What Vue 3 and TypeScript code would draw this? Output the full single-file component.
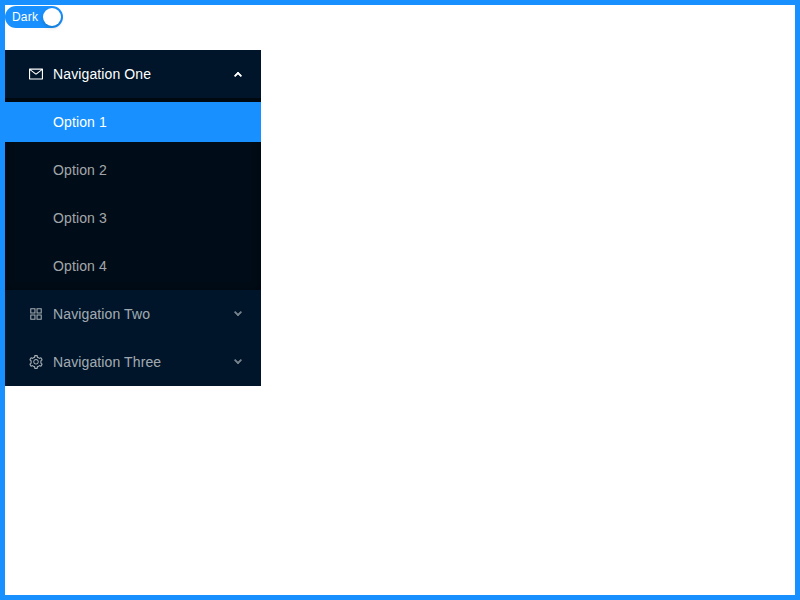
<script setup lang="ts">
import { ref } from 'vue'

interface MenuGroup {
  key: string
  title: string
  icon: string
  options: string[]
}

const groups: MenuGroup[] = [
  {
    key: 'sub1',
    title: 'Navigation One',
    icon: 'M928 160H96c-17.7 0-32 14.3-32 32v640c0 17.7 14.3 32 32 32h832c17.7 0 32-14.3 32-32V192c0-17.7-14.3-32-32-32zm-40 110.8V792H136V270.8l-27.6-21.5 39.3-50.5 42.8 33.3h643.1l42.8-33.3 39.3 50.5-27.7 21.5zM833.6 232L512 482 190.4 232l-42.8-33.3-39.3 50.5 27.6 21.5 341.6 265.6a55.99 55.99 0 0068.7 0L888 270.8l27.6-21.5-39.3-50.5-42.7 33.2z',
    options: ['Option 1', 'Option 2', 'Option 3', 'Option 4'],
  },
  {
    key: 'sub2',
    title: 'Navigation Two',
    icon: 'M464 144H160c-8.8 0-16 7.2-16 16v304c0 8.8 7.2 16 16 16h304c8.8 0 16-7.2 16-16V160c0-8.8-7.2-16-16-16zm-52 268H212V212h200v200zm452-268H560c-8.8 0-16 7.2-16 16v304c0 8.8 7.2 16 16 16h304c8.8 0 16-7.2 16-16V160c0-8.8-7.2-16-16-16zm-52 268H612V212h200v200zM464 544H160c-8.8 0-16 7.2-16 16v304c0 8.8 7.2 16 16 16h304c8.8 0 16-7.2 16-16V560c0-8.8-7.2-16-16-16zm-52 268H212V612h200v200zm452-268H560c-8.8 0-16 7.2-16 16v304c0 8.8 7.2 16 16 16h304c8.8 0 16-7.2 16-16V560c0-8.8-7.2-16-16-16zm-52 268H612V612h200v200z',
    options: [],
  },
  {
    key: 'sub3',
    title: 'Navigation Three',
    icon: 'M924.8 625.7l-65.5-56c3.1-19 4.7-38.4 4.7-57.8s-1.6-38.8-4.7-57.8l65.5-56a32.03 32.03 0 009.3-35.2l-.9-2.6a443.74 443.74 0 00-79.7-137.9l-1.8-2.1a32.12 32.12 0 00-35.1-9.5l-81.3 28.9c-30-24.6-63.5-44-99.7-57.6l-15.7-85a32.05 32.05 0 00-25.8-25.7l-2.7-.5c-52.1-9.4-106.9-9.4-159 0l-2.7.5a32.05 32.05 0 00-25.8 25.7l-15.8 85.4a351.86 351.86 0 00-99 57.4l-81.9-29.1a32 32 0 00-35.1 9.5l-1.8 2.1a446.02 446.02 0 00-79.7 137.9l-.9 2.6c-4.5 12.5-.8 26.5 9.3 35.2l66.3 56.6c-3.1 18.8-4.6 38-4.6 57.1 0 19.2 1.5 38.4 4.6 57.1L99 625.5a32.03 32.03 0 00-9.3 35.2l.9 2.6c18.1 50.4 44.9 96.9 79.7 137.9l1.8 2.1a32.12 32.12 0 0035.1 9.5l81.9-29.1c29.8 24.5 63.1 43.9 99 57.4l15.8 85.4a32.05 32.05 0 0025.8 25.7l2.7.5a449.4 449.4 0 00159 0l2.7-.5a32.05 32.05 0 0025.8-25.7l15.7-85a350 350 0 0099.7-57.6l81.3 28.9a32 32 0 0035.1-9.5l1.8-2.1c34.8-41.1 61.6-87.5 79.7-137.9l.9-2.6c4.5-12.3.8-26.3-9.3-35zM788.3 465.9c2.5 15.1 3.8 30.6 3.8 46.1s-1.3 31-3.8 46.1l-6.6 40.1 74.7 63.9a370.03 370.03 0 01-42.6 73.6L721 702.8l-31.4 25.8c-23.9 19.6-50.5 35-79.3 45.8l-38.1 14.3-17.9 97a377.5 377.5 0 01-85 0l-17.9-97.2-37.8-14.5c-28.5-10.8-55-26.2-78.7-45.7l-31.4-25.9-93.4 33.2c-17-22.9-31.2-47.6-42.6-73.6l75.5-64.5-6.5-40c-2.4-14.9-3.7-30.3-3.7-45.5 0-15.3 1.2-30.6 3.7-45.5l6.5-40-75.5-64.5c11.3-26.1 25.6-50.7 42.6-73.6l93.4 33.2 31.4-25.9c23.7-19.5 50.2-34.9 78.7-45.7l37.9-14.3 17.9-97.2c28.1-3.2 56.8-3.2 85 0l17.9 97 38.1 14.3c28.7 10.8 55.4 26.2 79.3 45.8l31.4 25.8 92.8-32.9c17 22.9 31.2 47.6 42.6 73.6L781.8 426l6.5 39.9zM512 326c-97.2 0-176 78.8-176 176s78.8 176 176 176 176-78.8 176-176-78.8-176-176-176zm79.2 255.2A111.6 111.6 0 01512 614c-29.9 0-58-11.7-79.2-32.8A111.6 111.6 0 01400 502c0-29.9 11.7-58 32.8-79.2C454 401.6 482.1 390 512 390c29.9 0 58 11.6 79.2 32.8A111.6 111.6 0 01624 502c0 29.9-11.7 58-32.8 79.2z',
    options: [],
  },
]

const openKey = ref('sub1')
const selected = ref('Option 1')

function toggle(key: string) {
  openKey.value = openKey.value === key ? '' : key
}
</script>

<template>
  <main class="page">
    <button class="switch" type="button" role="switch" aria-checked="true">
      <span class="switch-label">Dark</span>
      <span class="switch-handle"></span>
    </button>
    <ul class="menu">
      <li v-for="group in groups" :key="group.key" class="submenu" :class="{ open: openKey === group.key }">
        <div class="title" @click="toggle(group.key)">
          <svg class="icon" viewBox="64 64 896 896" width="14" height="14" fill="currentColor">
            <path :d="group.icon" />
          </svg>
          <span class="title-text">{{ group.title }}</span>
          <i class="arrow"></i>
        </div>
        <ul v-if="openKey === group.key && group.options.length" class="options">
          <li
            v-for="option in group.options"
            :key="option"
            class="option"
            :class="{ selected: selected === option }"
            @click="selected = option"
          >
            {{ option }}
          </li>
        </ul>
      </li>
    </ul>
  </main>
</template>

<style>
body {
  background: #fff;
}
</style>

<style scoped>
.page {
  box-sizing: border-box;
  display: flex;
  flex-direction: column;
  align-items: flex-start;
  gap: 22px;
  min-height: 100vh;
  padding-top: 1px;
  border: 5px solid #1890ff;
  font-family: 'Liberation Sans', Arial, sans-serif;
  font-size: 14px;
  font-kerning: normal;
  letter-spacing: 0.12px;
}

.switch {
  display: flex;
  align-items: center;
  gap: 5px;
  box-sizing: border-box;
  width: 58px;
  height: 22px;
  padding: 0 2px 0 7px;
  border: 0;
  border-radius: 100px;
  background: #1890ff;
  color: #fff;
  font-family: inherit;
  font-size: 12px;
  line-height: 22px;
  letter-spacing: 0.2px;
  cursor: pointer;
}

.switch-label {
  width: 26px;
  text-align: left;
}

.switch-handle {
  flex: none;
  width: 18px;
  height: 18px;
  border-radius: 9px;
  background: #fff;
  box-shadow: 0 2px 4px 0 rgba(0, 35, 11, 0.2);
}

.menu,
.options {
  margin: 0;
  padding: 0;
  list-style: none;
}

.menu {
  width: 256px;
  background: #001529;
  color: rgba(255, 255, 255, 0.65);
}

.title {
  display: flex;
  align-items: center;
  height: 40px;
  padding: 4px 16px 4px 24px;
  line-height: 40px;
  cursor: pointer;
}

.submenu.open .title {
  color: #fff;
}

.icon {
  flex: none;
  margin-right: 10px;
}

.title-text {
  flex: 1;
}

.arrow {
  position: relative;
  width: 10px;
  height: 0;
  opacity: 0.45;
}

.arrow::before,
.arrow::after {
  content: '';
  position: absolute;
  top: 0;
  left: 0;
  width: 6px;
  height: 2px;
  border-radius: 2px;
  background: #fff linear-gradient(to right, #fff, #fff);
}

.arrow::before {
  transform: rotate(-45deg) translateX(2px);
}

.arrow::after {
  transform: rotate(45deg) translateX(-2px);
}

.open .arrow {
  opacity: 1;
  transform: translateY(-2px);
}

.open .arrow::before {
  transform: rotate(45deg) translateX(2px);
}

.open .arrow::after {
  transform: rotate(-45deg) translateX(-2px);
}

.options {
  display: flex;
  flex-direction: column;
  gap: 8px;
  padding: 4px 0;
  background: #000c17;
  box-shadow: 0 2px 8px rgba(0, 0, 0, 0.45) inset;
}

.option {
  height: 40px;
  padding-left: 48px;
  line-height: 40px;
  cursor: pointer;
}

.option.selected {
  background: #1890ff;
  color: #fff;
}
</style>
